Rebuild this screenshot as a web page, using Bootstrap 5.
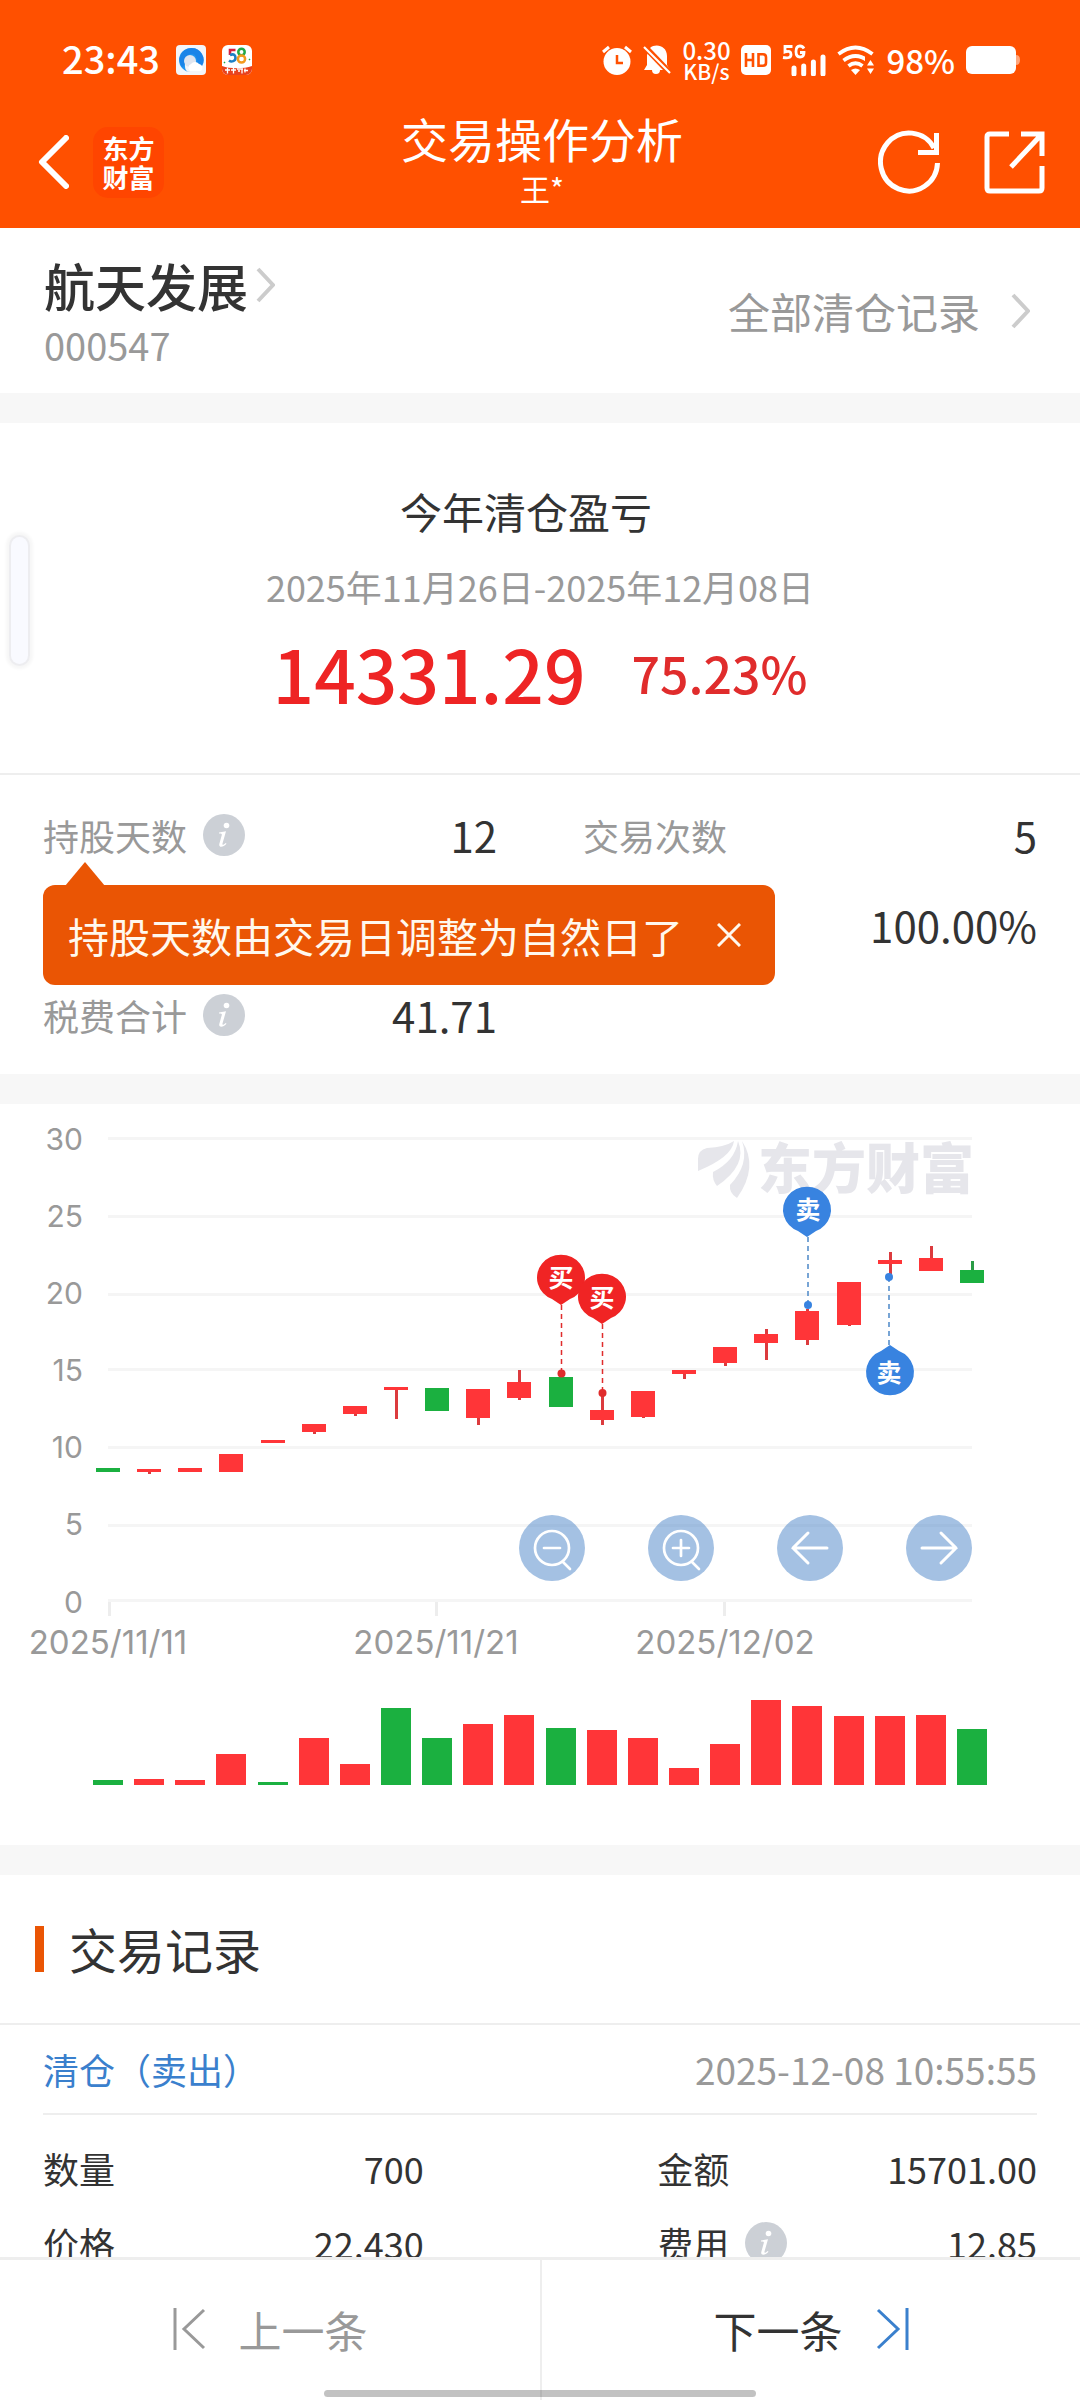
<!DOCTYPE html>
<html lang="zh-CN">
<head>
<meta charset="utf-8">
<meta name="viewport" content="width=device-width, initial-scale=1">
<title>交易操作分析</title>
<link rel="stylesheet" href="https://cdn.jsdelivr.net/npm/bootstrap@5.3.0/dist/css/bootstrap.min.css">
<style>
  body { font-family: "Noto Sans CJK SC", sans-serif; color: #333; background: #fff; line-height: 1; }
  a, a:hover { color: inherit; text-decoration: none; }
  svg { display: block; flex: none; }
  button { font-family: inherit; }
  .plain-btn { background: none; border: 0; padding: 0; color: inherit; }
  .dim { color: #999; }
  .brand-head { background: #ff5000; color: #fff; height: 228px; }
  .status-row { height: 120px; padding: 0 60px 0 62px; }
  .clock { font-size: 38px; line-height: 36px; font-weight: 500; padding-bottom: 4px; }
  .status-icons { gap: 11px; }
  .net-speed { font-size: 24px; line-height: 20px; font-weight: 500; width: 48px; }
  .net-speed small { font-size: 21px; }
  .percent { font-size: 33px; font-weight: 500; }
  .title-row { height: 108px; padding: 0 34px 24px 38px; }
  .side { flex: 1 1 0; }
  .side-tools { gap: 44px; }
  .logo-tile { width: 71px; height: 71px; border-radius: 15px; background: #ff4500; font: 700 26px/29px "Noto Sans CJK SC", sans-serif; }
  .page-title { font-size: 47px; line-height: 52px; font-weight: 400; }
  .owner { font-size: 30px; line-height: 48px; }
  .stock-row { height: 165px; padding: 0 46px 0 44px; }
  .stock-name { font-size: 51px; line-height: 60px; font-weight: 500; }
  .stock-code { font-size: 38px; line-height: 60px; }
  .all-link { font-size: 42px; }
  .band { height: 30px; background: #f7f7f7; }
  .summary { padding: 60px 0 62px; border-bottom: 2px solid #eee; }
  .fs-head { font-size: 42px; line-height: 56px; padding-right: 28px; }
  .fs-date { font-size: 36px; line-height: 94px; }
  .profit { font-size: 73px; line-height: 78px; color: #ee2424; font-weight: 500; }
  .profit-rate { font-size: 50px; line-height: 78px; color: #e02c2c; font-weight: 500; }
  .profit-line { gap: 46px; }
  .stats { padding: 15px 43px 14px; }
  .stat { height: 90px; font-size: 36px; }
  .stat dd, .stat dt { margin: 0; font-weight: 400; }
  .stat dd { font-size: 42px; }
  .stats .row { --bs-gutter-x: 86px; }
  .tip { left: 43px; top: 110px; height: 100px; padding: 0 34px 0 25px; gap: 34px; border-radius: 12px; background: #ea5504; color: #fff8ee; font-size: 41px; }
  .tip::before { content: ""; position: absolute; left: 22px; top: -23px; border: solid transparent; border-width: 0 20px 24px; border-bottom-color: #ea5504; }
  .chart-tools { right: 10%; bottom: 264px; gap: 63px; }
  .tool { width: 66px; height: 66px; background: rgba(73,131,199,.5); }
  .axis-text { font: 30px Inter, sans-serif; fill: #999; }
  .axis-dates { font-size: 33px; }
  .rec-head { height: 150px; padding: 0 35px; gap: 25px; border-bottom: 2px solid #eee; font-size: 48px; }
  .rec-head::before { content: ""; width: 9px; height: 46px; background: #ea5504; }
  .rec-head h2 { font-size: 48px; font-weight: 400; }
  .rec-type { margin: 0 43px; height: 90px; border-bottom: 2px solid #eee; font-size: 36px; }
  .rec-type a { color: #3a80cd; }
  .rec-type time { font-size: 37px; }
  .rec-body { padding: 15px 43px 0; font-size: 36px; }
  .rec-line { height: 75px; }
  .rec-left { width: 38.3%; }
  .rec-right { width: 38.2%; }
  .pager { height: 143px; background: #fff; border-top: 3px solid #eee; }
  .pager button { font-size: 43px; padding-bottom: 2px; }
  .pager button + button { border-left: 2px solid #eee; }
  .home-pill { left: 30%; right: 30%; bottom: 3px; height: 7px; border-radius: 4px; background: rgba(0,0,0,.24); }
  .edge-grip { left: 11px; top: 537px; width: 17px; height: 127px; border-radius: 9px; background: #f9faff; box-shadow: 0 0 0 2px #ededf0, 0 0 3px 5px #f7f7f7; }
</style>
<script src="https://cdn.jsdelivr.net/npm/bootstrap@5.3.0/dist/js/bootstrap.bundle.min.js"></script>
</head>
<body>
<svg width="0" height="0" class="position-absolute" aria-hidden="true">
  <defs>
    <symbol id="info" viewBox="0 0 42 42"><circle cx="21" cy="21" r="21" fill="#ccd0d6"/><circle cx="23.500" cy="11.500" r="2.800" fill="#fff"/><path d="M16 18.500l7-1.200-3.500 12.200c-.4 1.700.8 1.700 3.200-.6l.8.8c-3 3.600-8 4.300-7.200.2l2.500-9c.3-1.300-.6-1.400-2.800-1.400z" fill="#fff"/></symbol>
  </defs>
</svg>

<header class="brand-head">
  <div class="status-row d-flex justify-content-between align-items-center">
    <div class="d-flex align-items-center">
      <span class="clock me-3">23:43</span>
      <svg width="30" height="30" viewBox="0 0 30 30"><rect width="30" height="30" rx="4" fill="#f3f5f9"/><path d="M15 3a12 12 0 1 0 0 24c-5 0-6-3-6-6-1-7 6-9 9-6 2 2 2 3 2 4 2-1 5 0 6 2A12 12 0 0 0 15 3z" fill="#2196f0"/><path d="M15 3a12 12 0 0 0-9 19c4 0 3-13 9-13s5 5 7 10l4 2A12 12 0 0 0 15 3z" fill="#1677e2" opacity=".55"/><circle cx="14" cy="16" r="6" fill="#dfe5ef"/><path d="M14 26a4 4 0 0 1 1-7 5 5 0 0 1 8 0 4 4 0 0 1 2 7z" fill="#fff"/></svg>
      <svg class="ms-3" width="30" height="30" viewBox="0 0 30 30"><rect width="30" height="30" rx="6" fill="#fff"/><path d="M0 21c8 3 22 3 30 0v3a6 6 0 0 1-6 6H6a6 6 0 0 1-6-6z" fill="#e8421d"/><path d="M13.500 5H8v5" fill="none" stroke="#d81e3c" stroke-width="2.600"/><path d="M8 10c4-1.500 5.500 0 5.500 3s-4 4.500-6.500 2.500" fill="none" stroke="#1d7fc4" stroke-width="2.600"/><circle cx="19.500" cy="7" r="3.200" fill="none" stroke="#23a847" stroke-width="2.500"/><circle cx="19.500" cy="14" r="3.600" fill="none" stroke="#f39a1d" stroke-width="2.500"/><path d="M2 17l1 1m24-3l1-1" stroke="#23a847" stroke-width="1.500"/><path d="M5.500 22.500v6M3 25h5M11.500 22.500v6M9 25h5M15 24h6m-1 0v4.500M16 26h2M23 23.500v4M22 25.500h4" stroke="#fff" stroke-width="1.300"/></svg>
    </div>
    <div class="status-icons d-flex align-items-center">
      <svg width="30" height="30" viewBox="0 0 30 30"><circle cx="15" cy="16.500" r="13.500" fill="#fff"/><path d="M1 7l6-5m22 5l-6-5" stroke="#fff" stroke-width="3"/><path d="M15 10v8h6" fill="none" stroke="#ff5000" stroke-width="2.500"/></svg>
      <svg width="28" height="30" viewBox="0 0 28 30"><path d="M7 3c6-5 17-2 17 8v9l3 5H17a4 4 0 0 1-8 0H1l3-5V10z" fill="#fff"/><path d="M0 0l28 29" stroke="#ff5000" stroke-width="6"/><path d="M1 2l26 26" stroke="#fff" stroke-width="2.200"/></svg>
      <div class="net-speed text-center text-nowrap">0.30<br><small>KB/s</small></div>
      <svg width="30" height="30" viewBox="0 0 30 30"><rect width="30" height="30" rx="5" fill="#fff"/><path d="M5 8v14M12 8v14M5 15h7M17.500 9.200h4.500q3 0 3 3v5.600q0 3-3 3h-4.500z" fill="none" stroke="#ff5000" stroke-width="2.600"/></svg>
      <svg width="44" height="32" viewBox="0 0 44 32"><path d="M10.500 2.500H3V8q6-2 6 2.500T1 13.500M22 4.500q-1.500-2.500-4-2.500-4 0-4 5.500t4 5.500q4 0 4-4.500h-4" fill="none" stroke="#fff" stroke-width="2.800"/><path d="M12 24v6m9.700-8v8m9.700-12v12m9.600-17v17" stroke="#fff" stroke-width="5" stroke-linecap="round"/></svg>
      <svg width="38" height="30" viewBox="0 0 38 30"><g fill="none" stroke="#fff" stroke-width="3.800"><path d="M1.500 9q17-13 34 0"/><path d="M6.500 15.500q12-9 24 0"/><path d="M11.500 21q7-5.500 14 0"/></g><path d="M14 25q4.500-3 9 0l-4.500 5z" fill="#fff"/><path d="M28 11h10v19H28z" fill="#ff5000"/><path d="M33.500 15l3.500 5.500h-7zM33.500 29l3.500-5.500h-7z" fill="#fff"/></svg>
      <span class="percent">98%</span>
      <svg width="54" height="28" viewBox="0 0 54 28"><rect width="50" height="28" rx="6" fill="#fff"/><path d="M50 9q4 0 4 5t-4 5z" fill="#ffa67c"/></svg>
    </div>
  </div>
  <div class="title-row d-flex justify-content-between align-items-center">
    <div class="side d-flex align-items-center gap-4">
      <button class="plain-btn" aria-label="返回"><svg width="31" height="54" viewBox="0 0 31 54"><path d="M28 3L4 27l24 24" fill="none" stroke="#fff" stroke-width="6" stroke-linecap="round" stroke-linejoin="round"/></svg></button>
      <div class="logo-tile d-flex align-items-center justify-content-center text-center">东方<br>财富</div>
    </div>
    <div class="text-center">
      <h1 class="page-title m-0">交易操作分析</h1>
      <div class="owner">王*</div>
    </div>
    <div class="side side-tools d-flex justify-content-end">
      <button class="plain-btn" aria-label="刷新"><svg width="62" height="64" viewBox="0 0 62 64"><path d="M59.500 33A28.500 29 0 1 1 56 18" fill="none" stroke="#fff" stroke-width="5"/><path d="M58.500 3v19.500H40" fill="none" stroke="#fff" stroke-width="5"/></svg></button>
      <button class="plain-btn" aria-label="分享"><svg width="62" height="64" viewBox="0 0 62 64"><path d="M25 4H6q-3 0-3 3v51q0 3 3 3h49q3 0 3-3V36" fill="none" stroke="#fff" stroke-width="5"/><path d="M37 4h21v22M58 4L27 37" fill="none" stroke="#fff" stroke-width="5"/></svg></button>
    </div>
  </div>
</header>

<main class="position-relative">
  <section class="stock-row d-flex justify-content-between align-items-center">
    <div class="pt-2">
      <a href="#" class="stock-name d-flex align-items-center">航天发展<svg class="ms-2" width="19" height="36" viewBox="0 0 19 36"><path d="M2 2l15 16L2 34" fill="none" stroke="#ccc" stroke-width="4"/></svg></a>
      <div class="stock-code dim">000547</div>
    </div>
    <a href="#" class="all-link dim d-flex align-items-center">全部清仓记录<svg class="ms-4 me-1 d-block" width="26" height="36" viewBox="-7 0 26 36"><path d="M2 2l15 16L2 34" fill="none" stroke="#ccc" stroke-width="4"/></svg></a>
  </section>
  <div class="band"></div>

  <section class="summary text-center">
    <div class="fs-head">今年清仓盈亏</div>
    <div class="fs-date dim">2025年11月26日-2025年12月08日</div>
    <div class="profit-line d-flex justify-content-center">
      <span class="profit">14331.29</span><span class="profit-rate">75.23%</span>
    </div>
  </section>

  <section class="stats position-relative">
    <div class="row">
      <dl class="col-6 stat d-flex justify-content-between align-items-center m-0"><dt class="dim d-flex align-items-center gap-3">持股天数<svg width="42" height="42"><use href="#info"/></svg></dt><dd>12</dd></dl>
      <dl class="col-6 stat d-flex justify-content-between align-items-center m-0"><dt class="dim">交易次数</dt><dd>5</dd></dl>
      <dl class="col-12 stat d-flex justify-content-end align-items-center m-0"><dd>100.00%</dd></dl>
      <dl class="col-6 stat d-flex justify-content-between align-items-center m-0"><dt class="dim d-flex align-items-center gap-3">税费合计<svg width="42" height="42"><use href="#info"/></svg></dt><dd>41.71</dd></dl>
    </div>
    <div class="tip position-absolute d-flex align-items-center text-nowrap" role="tooltip">持股天数由交易日调整为自然日了
      <button class="plain-btn" aria-label="关闭"><svg width="24" height="24" viewBox="0 0 24 24"><path d="M1 1l22 22M23 1L1 23" stroke="#fff8ee" stroke-width="3"/></svg></button>
    </div>
  </section>
  <div class="band"></div>

  <section class="position-relative">
    <svg class="w-100" viewBox="0 0 1080 741" id="chart" role="img" aria-label="股价走势">
      <g transform="translate(0 -1104)">
        <path d="M108 1138.500h864M108 1216.500h864M108 1294.500h864M108 1369.500h864M108 1447.500h864M108 1525.500h864M108 1600.500h864" stroke="#f5f5f5" stroke-width="3"/>
        <path d="M109.500 1602v14M436.500 1602v14M724.500 1602v14" stroke="#ededed" stroke-width="3"/>
        <g fill="#e6e6eb"><path d="M698 1159q0-9 9-11 18-1 27-7-2 16-36 30zM713 1172q22-11 25-31 10 24-21 45-5-6-4-14zM730 1185q20-21 12-44 17 26-5 57-8-5-7-13z"/>
        <text x="758" y="1189" font-size="54" font-weight="900">东方财富</text></g>
        <g class="axis-text">
          <g text-anchor="end"><text x="83" y="1150">30</text><text x="83" y="1227">25</text><text x="83" y="1304">20</text><text x="83" y="1381">15</text><text x="83" y="1458">10</text><text x="83" y="1535">5</text><text x="83" y="1613">0</text></g>
          <g class="axis-dates" text-anchor="middle"><text x="108" y="1654">2025/11/11</text><text x="436" y="1654">2025/11/21</text><text x="725" y="1654">2025/12/02</text></g>
        </g>
        <g id="candles"></g>
        <g id="volumes"></g>
        <g fill="none" stroke-width="1.500" stroke-dasharray="5 4"><path d="M561.500 1305v68M602.500 1324v68" stroke="#e02c2c"/><path d="M808 1237v68M889 1277v68" stroke="#4c88c8"/></g>
        <g fill="#e02c2c"><circle cx="561.500" cy="1373.500" r="4"/><circle cx="602.500" cy="1393" r="4"/></g>
        <g fill="#3883e0"><circle cx="808" cy="1305" r="4"/><circle cx="889" cy="1277" r="4"/></g>
        <path d="M561 1305l-9-6a24 23 0 1 1 18 0z" fill="#f02424"/>
        <path d="M602 1324l-9-6a24 23 0 1 1 18 0z" fill="#f02424"/>
        <path d="M807 1237l-9-6a24 23 0 1 1 18 0z" fill="#3883e0"/>
        <path d="M890 1345l-9 6a24 23 0 1 0 18 0z" fill="#3883e0"/>
        <g fill="#fff" font-size="25" font-weight="700" text-anchor="middle"><text x="561" y="1287">买</text><text x="602" y="1307">买</text><text x="808" y="1219">卖</text><text x="889" y="1382">卖</text></g>
      </g>
    </svg>
    <div class="chart-tools position-absolute d-flex">
      <button class="plain-btn tool rounded-circle" aria-label="缩小"><svg width="66" height="66" viewBox="0 0 66 66" fill="none" stroke="#fff" stroke-width="2.700" stroke-linecap="round"><circle cx="33" cy="33" r="17"/><path d="M25 33h16M44 47l7 7"/></svg></button>
      <button class="plain-btn tool rounded-circle" aria-label="放大"><svg width="66" height="66" viewBox="0 0 66 66" fill="none" stroke="#fff" stroke-width="2.700" stroke-linecap="round"><circle cx="33" cy="33" r="17"/><path d="M25 33h16M33 25v16M44 47l7 7"/></svg></button>
      <button class="plain-btn tool rounded-circle" aria-label="向左"><svg width="66" height="66" viewBox="0 0 66 66" fill="none" stroke="#fff" stroke-width="3" stroke-linecap="round"><path d="M50 33H16M31 18L16 33l15 15"/></svg></button>
      <button class="plain-btn tool rounded-circle" aria-label="向右"><svg width="66" height="66" viewBox="0 0 66 66" fill="none" stroke="#fff" stroke-width="3" stroke-linecap="round"><path d="M16 33h34M35 18l15 15-15 15"/></svg></button>
    </div>
  </section>
  <div class="band"></div>

  <section>
    <div class="rec-head d-flex align-items-center"><h2 class="m-0">交易记录</h2></div>
    <div class="rec-type d-flex justify-content-between align-items-center"><a href="#">清仓（卖出）</a><time class="dim">2025-12-08 10:55:55</time></div>
    <div class="rec-body">
      <div class="rec-line d-flex justify-content-between align-items-center">
        <div class="rec-left d-flex justify-content-between"><span>数量</span><span>700</span></div>
        <div class="rec-right d-flex justify-content-between"><span>金额</span><span>15701.00</span></div>
      </div>
      <div class="rec-line d-flex justify-content-between align-items-center">
        <div class="rec-left d-flex justify-content-between"><span>价格</span><span>22.430</span></div>
        <div class="rec-right d-flex justify-content-between align-items-center"><span class="d-flex align-items-center gap-3">费用<svg width="42" height="42"><use href="#info"/></svg></span><span>12.85</span></div>
      </div>
    </div>
  </section>
</main>

<div class="edge-grip position-absolute"></div>

<nav class="pager fixed-bottom d-flex" aria-label="记录切换">
  <button class="plain-btn dim w-50 d-flex align-items-center justify-content-center gap-4"><svg class="me-2" width="34" height="42" viewBox="0 0 34 42"><path d="M2 0v42M31 2L11 21l20 19" fill="none" stroke="#999" stroke-width="3"/></svg>上一条</button>
  <button class="plain-btn w-50 d-flex align-items-center justify-content-center gap-4">下一条<svg class="ms-2" width="34" height="42" viewBox="0 0 34 42"><path d="M32 0v42M3 2l20 19L3 40" fill="none" stroke="#3a80cd" stroke-width="3"/></svg></button>
  <div class="home-pill position-absolute"></div>
</nav>

<script>
  // One row per trading day: colour, open/close top and bottom, high, low, top of the volume bar
  const days = [
    ['g',1468,1472,1468,1472,1780],['r',1469,1472,1469,1474,1779],['r',1468,1472,1468,1472,1780],
    ['r',1454,1472,1454,1472,1754],['r',1440,1443,1440,1443,1782],['r',1424,1432,1424,1434,1738],
    ['r',1406,1414,1406,1416,1764],['r',1387,1390,1387,1419,1708],['g',1388,1411,1388,1411,1738],
    ['r',1389,1418,1389,1425,1724],['r',1382,1398,1370,1400,1715],['g',1377,1407,1377,1407,1728],
    ['r',1410,1420,1393,1425,1730],['r',1391,1417,1391,1418,1738],['r',1370,1374,1370,1379,1768],
    ['r',1347,1363,1347,1366,1744],['r',1334,1343,1329,1360,1700],['r',1311,1340,1309,1345,1706],
    ['r',1282,1325,1282,1326,1716],['r',1260,1264,1252,1274,1716],['r',1258,1271,1246,1271,1715],
    ['g',1270,1283,1261,1283,1729]
  ];
  const volumeColours = 'grrrgrrggrrgrrrrrrrrrg';
  const bodyColour = { g: '#1bb040', r: '#ff3538' };
  const wickColour = { g: '#2a9c46', r: '#dc3b3e' };
  let candles = '', volumes = '';
  days.forEach(([c, top, bottom, high, low, vol], i) => {
    const x = Math.round(108 + i * 41.14);
    if (high < top || low > bottom) candles += `<rect x="${x - 1}" y="${high}" width="3" height="${low - high}" fill="${wickColour[c]}"/>`;
    candles += `<rect x="${x - 12}" y="${top}" width="24" height="${bottom - top}" fill="${bodyColour[c]}"/>`;
    volumes += `<rect x="${x - 15}" y="${vol}" width="30" height="${1785 - vol}" fill="${bodyColour[volumeColours[i]]}"/>`;
  });
  document.getElementById('candles').innerHTML = candles;
  document.getElementById('volumes').innerHTML = volumes;
</script>
</body>
</html>
